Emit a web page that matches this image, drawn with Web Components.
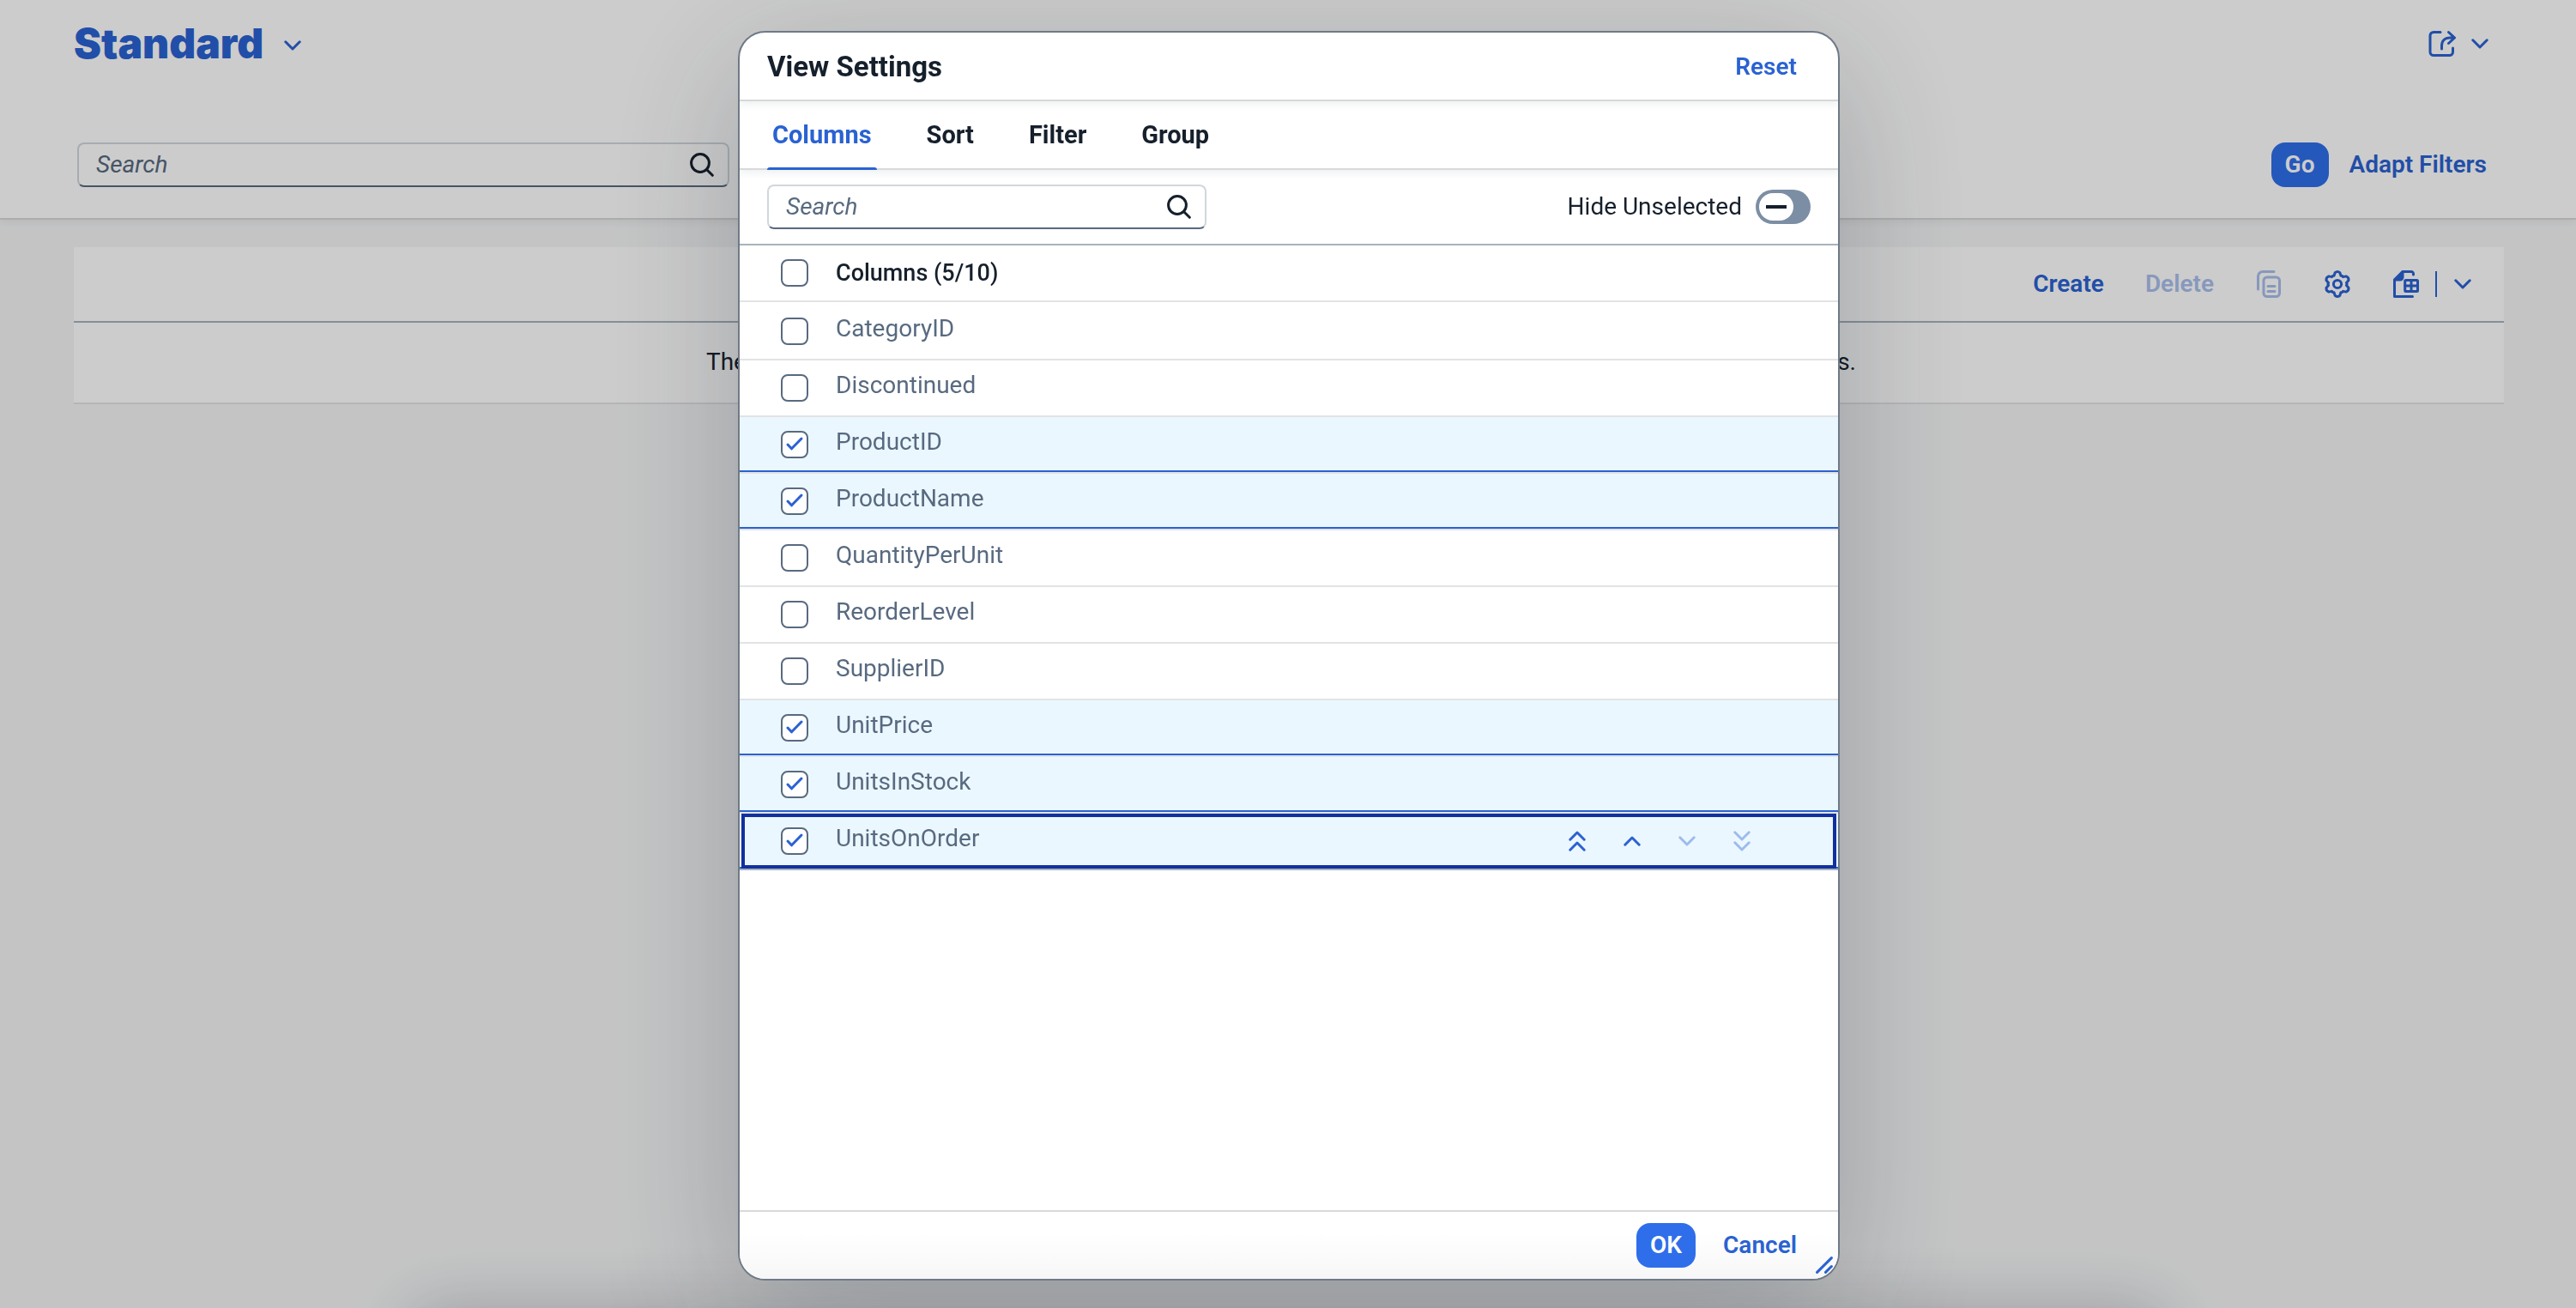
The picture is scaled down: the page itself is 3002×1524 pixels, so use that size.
<!DOCTYPE html>
<html lang="en">
<head>
<meta charset="utf-8">
<title>View Settings</title>
<style>
:root{
  --blue:#2a62d2; --fill:#2f6eea; --ink:#16202c; --muted:#586a80;
  --line:#e2e3e5; --bar-line:#d9d9d9; --strong-line:#a8b3bd; --selected:#ebf7fe; --focus:#1130a0;
}
html,body{height:100%}
body{margin:0;background:#f5f6f7;color:var(--ink);font:400 28px/36px Roboto,"Liberation Sans",sans-serif;overflow:hidden}
</style>
</head>
<body>
<report-page></report-page>
<modal-layer>
  <settings-dialog heading="View Settings"></settings-dialog>
</modal-layer>
<script>
const gear = (() => {
  const p = (r, a) => { const t = a * Math.PI / 180; return (16 + r * Math.cos(t)).toFixed(2) + ' ' + (16 + r * Math.sin(t)).toFixed(2); };
  let d = '';
  for (let k = 0; k < 6; k++) {
    const a = -90 + k * 60;
    d += (k ? 'L' : 'M') + p(10.6, a - 22) + 'L' + p(13.6, a - 12) + 'Q' + p(15.6, a) + ' ' + p(13.6, a + 12) + 'L' + p(10.6, a + 22) + 'Q' + p(11.6, a + 30) + ' ' + p(10.6, a + 38);
  }
  return d + 'Z';
})();
const ICONS = {
  search: [28, 28, '<circle cx="12" cy="12" r="10.4"/><path d="M19.5 19.5 26.3 26.3"/>'],
  down: [20, 12, '<path d="M1.8 1.8 10 10 18.2 1.8"/>'],
  up: [20, 12, '<path d="M1.8 10.2 10 2 18.2 10.2"/>'],
  top: [20, 24, '<path d="M1.8 10.2 10 2 18.2 10.2M1.8 22.2 10 14 18.2 22.2"/>'],
  bottom: [20, 24, '<path d="M1.8 1.8 10 10 18.2 1.8M1.8 13.8 10 22 18.2 13.8"/>'],
  share: [32, 32, '<path d="M14 2.5H6a4 4 0 0 0-4 4V25.5a4 4 0 0 0 4 4H24.5a4 4 0 0 0 4-4V21M15.5 22V18.5C15.5 12.5 19 9 25 9H30M23.5 2.5 30.5 9 23.5 15.5"/>'],
  copy: [28, 32, '<path d="M20 1.5H7A5.5 5.5 0 0 0 1.5 7V22M13 18.5H21M13 24.5H21"/><rect x="8" y="8" width="18.5" height="22.5" rx="4"/>'],
  gear: [32, 32, `<path d="${gear}"/><circle cx="16" cy="16" r="4.6"/>`],
  sheet: [30, 32, '<path d="M23.5 5V4A2.5 2.5 0 0 0 21 1.5H11L1.5 11V30.5H22.5M21 11.5V24.5M13.7 18H28.5"/><path fill="currentColor" d="M11 1.5V8A3 3 0 0 1 8 11H1.5Z"/><rect x="13.7" y="11.5" width="14.8" height="13" rx="1"/>'],
  tick: [32, 32, '<path d="M8 16 12.5 20.8 24 9"/>'],
  grip: [20, 20, '<path d="M1.6 18.4 18.4 1.6M11.5 18.4 18.4 11.5"/>'],
};
const define = (name, render, init) => customElements.define(name, class extends HTMLElement {
  connectedCallback() {
    if (this.shadowRoot) return;
    this.attachShadow({ mode: 'open' }).innerHTML = render(this);
    if (init) init(this, this.shadowRoot);
  }
});

define('ui-icon', el => {
  const [w, h, body] = ICONS[el.getAttribute('name')];
  return `<style>:host{display:inline-flex;flex:none}svg{display:block}</style>
  <svg width="${w}" height="${h}" viewBox="0 0 ${w} ${h}" fill="none" stroke="currentColor" stroke-width="3" stroke-linecap="round" stroke-linejoin="round" aria-hidden="true">${body}</svg>`;
});

define('ui-button', el => `<style>
  :host{display:inline-flex}
  button{display:flex;align-items:center;justify-content:center;gap:18px;height:52px;padding:0 20px;border:0;border-radius:16px;background:none;color:var(--blue);font:600 28px/36px Roboto,"Liberation Sans",sans-serif;white-space:nowrap}
  :host([kind=primary]) button{background:var(--fill);color:#fff;padding:0 16px}
  :host([kind=icon]) button{width:72px;padding:0}
  :host([kind=step]) button{width:64px;height:48px;padding:0}
  :host([kind=menu]) button{width:60px;padding:0}
  :host([kind=split]) button{padding:0 18px}
  button:disabled{opacity:.4}
  </style><button type="button" ${el.hasAttribute('disabled') ? 'disabled' : ''} ${el.hasAttribute('label') ? `aria-label="${el.getAttribute('label')}"` : ''}><slot></slot></button>`);

define('ui-search', () => `<style>
  :host{display:block}
  form{display:flex;box-sizing:border-box;height:52px;border:2px solid #d1d7dc;border-bottom-color:var(--muted);border-radius:8px}
  input{flex:1;min-width:0;padding:0 0 0 20px;border:0;background:none;outline:0;color:var(--ink);font:inherit;appearance:none}
  input::placeholder{color:var(--muted);font-style:italic;opacity:1}
  button{width:60px;padding:0;border:0;background:none;color:var(--ink);display:flex;align-items:center;justify-content:center}
  </style><form><input type="search" placeholder="Search" aria-label="Search"><button type="button" aria-label="Search"><ui-icon name="search"></ui-icon></button></form>`);

define('ui-checkbox', el => `<style>
  :host{display:grid;width:32px}
  input,ui-icon{grid-area:1/1}
  input{appearance:none;box-sizing:border-box;width:32px;height:32px;margin:0;border:2px solid var(--muted);border-radius:8px;background:#fff}
  ui-icon{color:var(--blue);pointer-events:none;visibility:hidden}
  input:checked + ui-icon{visibility:visible}
  </style><input type="checkbox" aria-label="${el.getAttribute('label')}" ${el.hasAttribute('checked') ? 'checked' : ''}><ui-icon name="tick"></ui-icon>`);

define('ui-switch', () => `<style>
  :host{display:block}
  label{display:flex;align-items:center;gap:16px}
  input{appearance:none;box-sizing:border-box;display:flex;align-items:center;width:64px;height:40px;margin:0;padding:0 4px;border-radius:20px;background:#7c8ea4}
  input::before{content:"";width:40px;height:32px;border-radius:16px;background:linear-gradient(var(--ink),var(--ink)) center/24px 4px no-repeat #fff}
  </style><label><slot></slot><input type="checkbox" role="switch"></label>`);

define('filter-header', () => `<style>
  :host{display:block;position:relative;background:#fff;border-bottom:2px solid var(--bar-line);box-shadow:0 4px 8px rgba(0,0,0,.05);padding:0 84px 36px 86px}
  .title{display:flex;justify-content:space-between;align-items:center;height:102px;margin-bottom:64px;color:var(--blue)}
  .variant{display:flex;align-items:center;gap:24px;padding:0;border:0;background:none;color:inherit}
  .variant ui-icon{padding-top:4px}
  h1{margin:0;font:900 48px/60px Inter,"Liberation Sans",sans-serif}
  .filters{display:flex;align-items:center;padding-left:4px}
  ui-search{flex:0 1 760px}
  .actions{display:flex;gap:4px;margin-left:auto}
  </style>
  <div class="title">
    <button class="variant" type="button"><h1>Standard</h1><ui-icon name="down"></ui-icon></button>
    <ui-button kind="split" label="Share"><ui-icon name="share"></ui-icon><ui-icon name="down"></ui-icon></ui-button>
  </div>
  <div class="filters"><ui-search></ui-search>
    <div class="actions"><ui-button kind="primary">Go</ui-button><ui-button>Adapt Filters</ui-button></div>
  </div>`);

define('result-card', () => `<style>
  :host{display:block;background:#fff;border-bottom:2px solid var(--line)}
  .bar{display:flex;align-items:center;justify-content:flex-end;gap:8px;height:86px;padding-right:18px;border-bottom:2px solid var(--strong-line)}
  .split{display:flex;align-items:center}
  .rule{width:2px;height:30px;margin-left:-2px;background:var(--blue)}
  p{margin:0;padding:28px 18px 29px 0;text-align:center}
  </style>
  <div class="bar">
    <ui-button>Create</ui-button><ui-button disabled>Delete</ui-button>
    <ui-button kind="icon" label="Copy" disabled><ui-icon name="copy"></ui-icon></ui-button>
    <ui-button kind="icon" label="Settings"><ui-icon name="gear"></ui-icon></ui-button>
    <div class="split"><ui-button kind="icon" label="Export"><ui-icon name="sheet"></ui-icon></ui-button><span class="rule"></span><ui-button kind="menu" label="Export options"><ui-icon name="down"></ui-icon></ui-button></div>
  </div>
  <p>There are no visible columns in the table right now. Please select the columns you need in the table settings.</p>`);

define('report-page', () => `<style>
  :host{display:block}
  main{padding:32px 84px 32px 86px}
  </style><filter-header></filter-header><main><result-card></result-card></main>`);

define('modal-layer', () => `<style>
  :host{position:fixed;inset:0;display:flex;justify-content:center;padding:36px 0 32px 2px;background:rgba(0,0,0,.2)}
  :host::after{content:"";position:absolute;top:100%;left:16%;right:16%;height:160px;box-shadow:0 0 80px rgba(30,34,40,.24)}
  ::slotted(*){z-index:1}
  </style><slot></slot>`);

define('column-table', () => {
  const rows = [['CategoryID'], ['Discontinued'], ['ProductID', 1], ['ProductName', 1], ['QuantityPerUnit'], ['ReorderLevel'], ['SupplierID'], ['UnitPrice', 1], ['UnitsInStock', 1], ['UnitsOnOrder', 1, 1]];
  const steps = `<ui-button kind="step" label="Move to top"><ui-icon name="top"></ui-icon></ui-button><ui-button kind="step" label="Move up"><ui-icon name="up"></ui-icon></ui-button><ui-button kind="step" label="Move down" disabled><ui-icon name="down"></ui-icon></ui-button><ui-button kind="step" label="Move to bottom" disabled><ui-icon name="bottom"></ui-icon></ui-button>`;
  return `<style>
  :host{display:block}
  table{width:100%;border-collapse:separate;border-spacing:0;table-layout:fixed}
  th,td{box-sizing:border-box;height:66px;padding:0;border-bottom:2px solid var(--line);text-align:left;vertical-align:middle}
  th{font-weight:500;font-size:27px}
  .pick{width:112px;padding-left:48px}
  .move{width:336px}
  td.name{color:var(--muted);padding-bottom:6px}
  tbody tr:first-child td{height:68px;padding-top:2px}
  .on td{background:var(--selected);box-shadow:inset 0 -2px var(--blue)}
  tr:last-child td{border-bottom-color:var(--strong-line)}
  .focus{position:relative}
  .focus .pick::after{content:"";position:absolute;inset:0 2px 2px;border:4px solid var(--focus);pointer-events:none}
  .steps{display:flex}
  </style><table>
  <thead><tr><th class="pick"><ui-checkbox label="Select all"></ui-checkbox></th><th>Columns (5/10)</th><th class="move"></th></tr></thead>
  <tbody>${rows.map(([n, on, f]) => `<tr class="${on ? 'on' : ''} ${f ? 'focus' : ''}"><td class="pick"><ui-checkbox label="${n}" ${on ? 'checked' : ''}></ui-checkbox></td><td class="name">${n}</td><td class="move">${f ? `<div class="steps">${steps}</div>` : ''}</td></tr>`).join('')}</tbody></table>`;
});

define('settings-dialog', el => `<style>
  :host{box-sizing:border-box;position:relative;display:flex;flex-direction:column;width:1284px;max-width:90vw;border:2px solid #6f7a87;border-radius:32px;background:#fff;box-shadow:0 40px 160px rgba(26,34,44,.24);overflow:hidden}
  header,nav,.tools,footer{flex:none;display:flex;align-items:center;box-sizing:border-box;position:relative}
  header,nav{height:80px;border-bottom:2px solid var(--bar-line);box-shadow:0 4px 8px rgba(34,53,72,.07)}
  header{justify-content:space-between;padding:2px 28px 0 32px}
  h2{margin:0;font:700 33px/40px Roboto,"Liberation Sans",sans-serif}
  nav{gap:52px;padding:0 32px}
  nav button{position:relative;height:100%;padding:0 6px;border:0;background:none;color:var(--ink);font:700 29px/36px Roboto,"Liberation Sans",sans-serif}
  nav button[aria-selected=true]{color:var(--blue)}
  nav button[aria-selected=true]::after{content:"";position:absolute;left:0;right:0;bottom:-2px;height:3px;border-radius:3px 3px 0 0;background:var(--blue)}
  .tools{justify-content:space-between;height:88px;padding:0 32px;border-bottom:2px solid var(--strong-line)}
  ui-search{flex:0 1 512px}
  column-table{flex:1;min-height:0}
  footer{justify-content:flex-end;gap:12px;height:80px;padding:0 28px 0 32px;border-top:2px solid var(--bar-line);background:linear-gradient(#fff 30%,#f7f7f8)}
  .grip{position:absolute;right:6px;bottom:6px;color:var(--blue)}
  </style>
  <header><h2>${el.getAttribute('heading')}</h2><ui-button>Reset</ui-button></header>
  <nav role="tablist"><button type="button" role="tab" aria-selected="true">Columns</button><button type="button" role="tab">Sort</button><button type="button" role="tab">Filter</button><button type="button" role="tab">Group</button></nav>
  <div class="tools"><ui-search></ui-search><ui-switch>Hide Unselected</ui-switch></div>
  <column-table></column-table>
  <footer><ui-button kind="primary">OK</ui-button><ui-button>Cancel</ui-button></footer>
  <ui-icon class="grip" name="grip"></ui-icon>`);
</script>
</body>
</html>
